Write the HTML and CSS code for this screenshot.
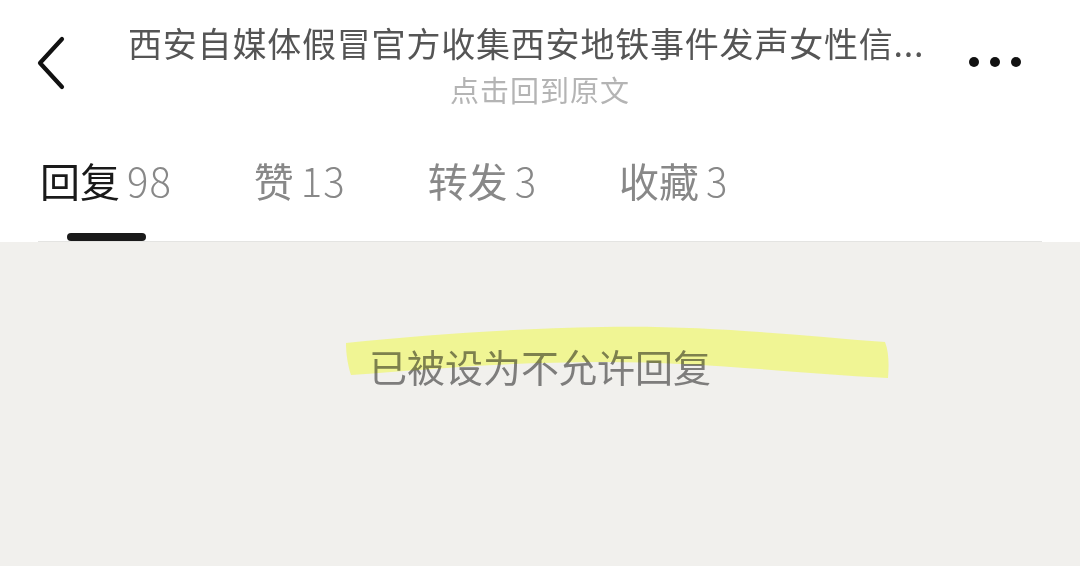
FILE: index.html
```html
<!DOCTYPE html>
<html lang="zh-CN">
<head>
	<meta charset="UTF-8">
	<title>回复</title>
	<link rel="stylesheet" href="styles.css">
</head>
<body>

<div class="header">
	<div class="nav-bar">
		<div class="back-btn">
			<svg width="32" height="56" viewBox="0 0 32 56">
				<path d="M26 3 L4 27 L26 51" fill="none" stroke="#111" stroke-width="4.2" stroke-linecap="round" stroke-linejoin="round"/>
			</svg>
		</div>
		<div class="title-block">
			<p class="title">西安自媒体假冒官方收集西安地铁事件发声女性信...</p>
			<p class="subtitle">点击回到原文</p>
		</div>
		<div class="more-btn">
			<span class="dot"></span>
			<span class="dot"></span>
			<span class="dot"></span>
		</div>
	</div>

	<ul class="tabs">
		<li class="tab active"><span class="tab-name">回复</span><span class="tab-count">98</span></li>
		<li class="tab"><span class="tab-name">赞</span><span class="tab-count">13</span></li>
		<li class="tab"><span class="tab-name">转发</span><span class="tab-count">3</span></li>
		<li class="tab"><span class="tab-name">收藏</span><span class="tab-count">3</span></li>
	</ul>
	<div class="divider"></div>
</div>

<div class="content">
	<div class="notice">
		<svg class="marker" width="550" height="60" viewBox="0 0 550 60">
			<path d="M3 17 C 80 9, 160 3, 260 1 C 360 -1, 450 9, 542 16 C 546 26, 546 40, 545 52 C 450 47, 360 36, 260 36 C 160 36, 80 44, 8 49 C 5 40, 3 28, 3 17 Z" fill="#eff58a" opacity="0.9"/>
		</svg>
		<p class="notice-text">已被设为不允许回复</p>
	</div>
</div>

</body>
</html>
```

FILE: styles.css
```css
body {
	margin: 0;
	padding: 0;
	background: #f1f0ed;
	font-family: "Noto Sans CJK SC", "Noto Sans", sans-serif;
	height: 566px;
	overflow: hidden;
}

.header {
	background: #fff;
}

.nav-bar {
	display: flex;
	align-items: flex-start;
	height: 128px;
}

.back-btn {
	width: 128px;
	padding: 36px 0 0 36px;
	box-sizing: border-box;
}

.title-block {
	flex: 1;
	min-width: 0;
	text-align: center;
	padding-top: 17px;
}

.title {
	margin: 0;
	font-size: 34px;
	line-height: 52px;
	letter-spacing: 0.8px;
	color: #555;
	text-align: left;
	white-space: nowrap;
}

.subtitle {
	margin: 0;
	font-size: 29px;
	line-height: 40px;
	letter-spacing: 1px;
	color: #b4b4b4;
}

.more-btn {
	width: 128px;
	display: flex;
	justify-content: flex-end;
	gap: 11px;
	padding: 57px 59px 0 0;
	box-sizing: border-box;
}

.dot {
	width: 10px;
	height: 10px;
	border-radius: 50%;
	background: #111;
}

.tabs {
	list-style: none;
	margin: 0;
	padding: 24px 0 0 40px;
	display: flex;
	gap: 82px;
}

.tab {
	position: relative;
	font-size: 40px;
	line-height: 56px;
	height: 89px;
	color: #888;
	white-space: nowrap;
}

.tab-count {
	font-weight: 300;
	margin-left: 7px;
	letter-spacing: 1px;
}

.tab.active .tab-name {
	color: #1a1a1a;
}

.tab.active::after {
	content: "";
	position: absolute;
	left: 50%;
	bottom: 0;
	width: 79px;
	height: 8px;
	margin-left: -39px;
	border-radius: 4px;
	background: #1a1a1a;
}

.divider {
	height: 1px;
	margin: 0 38px;
	background: #e4e4e2;
}

.content {
	display: flex;
	justify-content: center;
	padding-top: 98px;
}

.notice {
	position: relative;
}

.notice .marker {
	position: absolute;
	left: -26px;
	top: -14px;
}

.notice-text {
	position: relative;
	margin: 0;
	font-size: 38px;
	line-height: 52px;
	color: #858585;
	mix-blend-mode: multiply;
}
```
